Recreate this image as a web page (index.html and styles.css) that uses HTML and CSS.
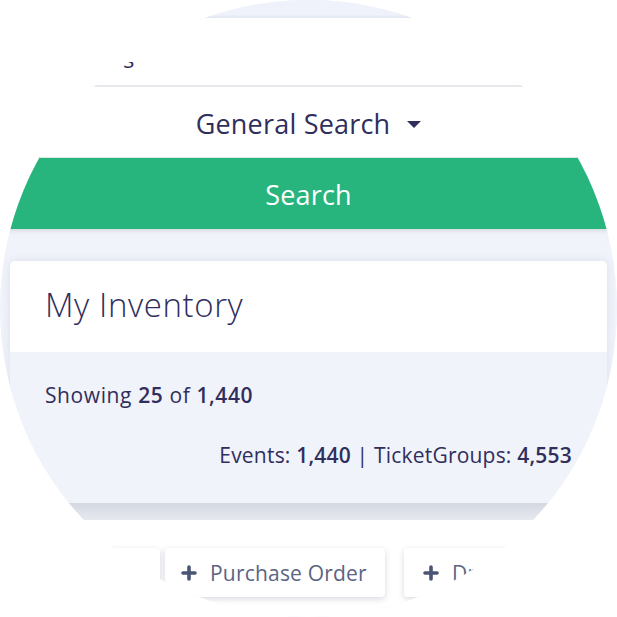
FILE: index.html
```html
<!DOCTYPE html>
<html lang="en">
<head>
<meta charset="utf-8">
<title>My Inventory</title>
<link rel="stylesheet" href="styles.css">
</head>
<body>
<div class="disc">
  <div class="cap"></div>
  <div class="search-panel">
    <div class="query">
      <div class="query-clip"><span class="query-text">s</span></div>
    </div>
    <div class="mode">
      <span class="mode-label">General Search</span>
      <span class="caret"></span>
    </div>
  </div>
  <div class="search-btn">Search</div>
  <div class="gap"></div>
  <div class="inventory">
    <div class="inv-head">
      <h1 class="inv-title">My Inventory</h1>
    </div>
    <div class="inv-body">
      <p class="showing">Showing <b>25</b> of <b>1,440</b></p>
      <p class="totals">Events: <b>1,440</b> | TicketGroups: <b>4,553</b></p>
    </div>
  </div>
  <div class="fold"></div>
  <div class="actions">
    <div class="action action-prev"></div>
    <div class="action action-po">
      <svg class="plus" width="16" height="16" viewBox="0 0 16 16"><path d="M8 2v12M2 8h12" stroke="currentColor" stroke-width="3.6" stroke-linecap="round"/></svg>
      <span>Purchase Order</span>
    </div>
    <div class="action action-next">
      <svg class="plus" width="16" height="16" viewBox="0 0 16 16"><path d="M8 2v12M2 8h12" stroke="currentColor" stroke-width="3.6" stroke-linecap="round"/></svg>
      <span>Draft</span>
    </div>
  </div>
</div>
</body>
</html>
```

FILE: styles.css
```css
* { box-sizing: border-box; }

html, body {
  margin: 0;
  padding: 0;
  background: #ffffff;
}

body {
  width: 617px;
  height: 617px;
  overflow: hidden;
  font-family: "Open Sans", Lato, "Liberation Sans", sans-serif;
  color: #302e5c;
}

.disc {
  width: 617px;
  height: 617px;
  border-radius: 50%;
  overflow: hidden;
  background: #f0f3fa;
  display: flex;
  flex-direction: column;
}

.cap {
  height: 18px;
  flex: none;
  background: #eff2fa;
  box-shadow: inset 0 -2px 2px rgba(40, 50, 90, 0.05);
}

.search-panel {
  height: 139px;
  flex: none;
  background: #ffffff;
  display: flex;
  flex-direction: column;
}

.query {
  height: 69px;
  flex: none;
  border-bottom: 2px solid #e7e7ec;
  padding-top: 44px;
  padding-left: 123px;
}

.query-clip {
  height: 8px;
  overflow: hidden;
}

.query-text {
  display: block;
  font-size: 24px;
  line-height: 24px;
  margin-top: -15px;
  color: #302e5c;
}

.mode {
  flex: 1;
  display: flex;
  align-items: center;
  justify-content: center;
  gap: 17px;
  padding-top: 2px;
}

.mode-label {
  font-size: 27px;
  letter-spacing: 0.2px;
  color: #302e5c;
}

.caret {
  width: 0;
  height: 0;
  border-left: 7px solid transparent;
  border-right: 7px solid transparent;
  border-top: 7px solid #302e5c;
  margin-top: 3px;
}

.search-btn {
  height: 72px;
  flex: none;
  background: #28b57d;
  border-top: 1px solid #dfe7e3;
  color: #ffffff;
  font-size: 27px;
  letter-spacing: 0.2px;
  display: flex;
  align-items: center;
  justify-content: center;
  padding-top: 2px;
  box-shadow: 0 2px 4px rgba(30, 60, 50, 0.12);
  position: relative;
  z-index: 1;
}

.gap {
  height: 32px;
  flex: none;
}

.inventory {
  margin: 0 10px;
  flex: none;
  border-radius: 5px 5px 0 0;
  box-shadow: 0 0 10px rgba(40, 50, 90, 0.10);
}

.inv-head {
  height: 91px;
  background: #ffffff;
  border-radius: 5px 5px 0 0;
  display: flex;
  align-items: center;
  padding: 0 35px 4px;
}

.inv-title {
  margin: 0;
  font-size: 33px;
  font-weight: 300;
  letter-spacing: 0.6px;
  color: #302e5c;
}

.inv-body {
  height: 151px;
  background: #f0f3fa;
  padding: 29px 35px 0;
  display: flex;
  flex-direction: column;
}

.inv-body p {
  margin: 0;
  font-size: 21px;
  letter-spacing: 0.2px;
  color: #302e5c;
}

.inv-body .showing {
  letter-spacing: 0.6px;
}

.inv-body b {
  font-weight: 600;
}

.totals {
  margin-top: 32px !important;
  text-align: right;
}

.fold {
  height: 17px;
  flex: none;
  background: linear-gradient(#d4d8e1, #e7e9f0);
}

.actions {
  flex: 1;
  background: #ffffff;
  display: flex;
  align-items: flex-start;
  padding-top: 28px;
}

.action {
  height: 49px;
  flex: none;
  background: #ffffff;
  border-radius: 4px;
  box-shadow: 0 2px 6px rgba(40, 50, 80, 0.18);
  display: flex;
  align-items: center;
  gap: 13px;
  padding: 0 19px 0 16px;
  color: #5b6483;
  font-size: 21px;
  letter-spacing: 0.2px;
  white-space: nowrap;
}

.action-prev {
  width: 160px;
  margin-right: 5px;
}

.action-po {
  width: 220px;
  margin-right: 19px;
}

.action-next {
  width: 200px;
  padding-left: 19px;
}

.plus {
  flex: none;
  color: #4a5576;
}
```
